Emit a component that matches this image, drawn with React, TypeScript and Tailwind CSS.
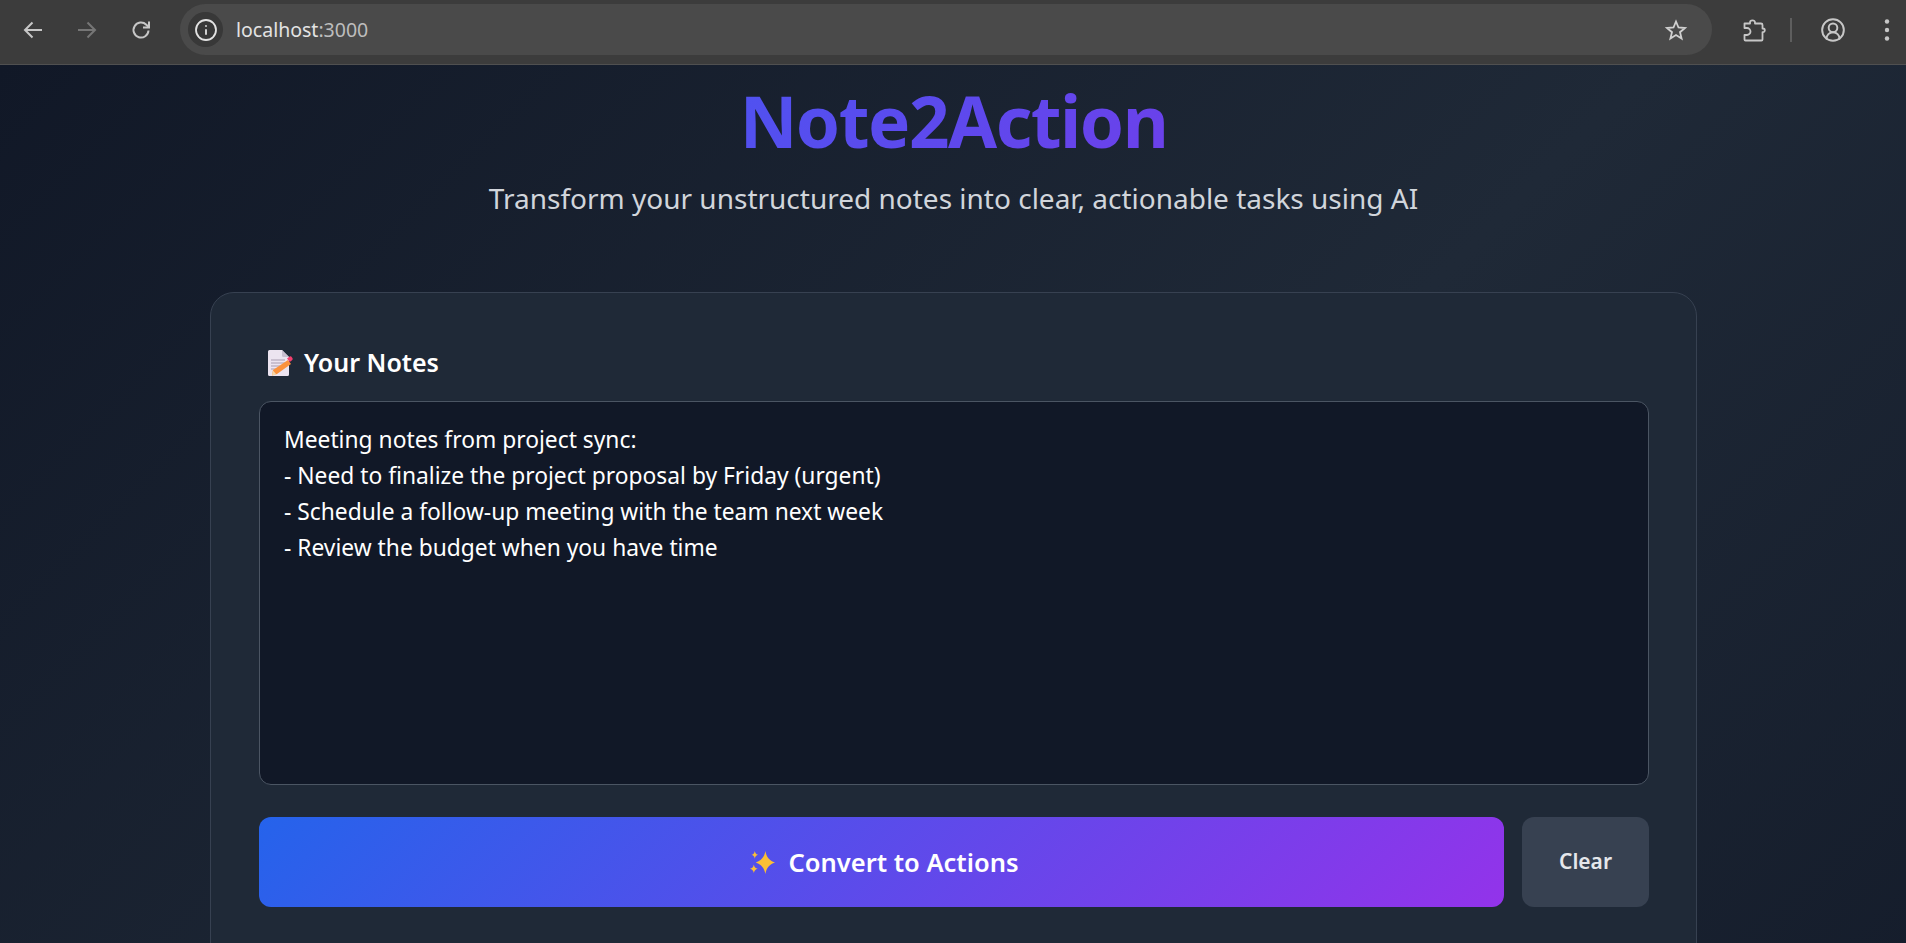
import { Info, CircleUserRound } from "lucide-react";

const MemoIcon = () => (
  <svg viewBox="0 0 26 28" className="w-[26px] h-[28px]">
    <path d="M1 2.5A1.5 1.5 0 0 1 2.5 1H15l7 7v17.5a1.5 1.5 0 0 1-1.5 1.5h-18A1.5 1.5 0 0 1 1 25.500Z" fill="#ece4f0" />
    <path d="M15 1l7 7h-5.500A1.500 1.500 0 0 1 15 6.500Z" fill="#c9bfd0" />
    <path d="M4 11h14M4 14h14M4 17h9M4 20h6" stroke="#a79bb0" strokeWidth="1.200" />
    <path d="M6 21l15-10 3 4-14 10-5 1.500Z" fill="#fb923c" />
    <path d="M5 26.500l1-5 3.500 4Z" fill="#f7d7a8" />
    <path d="M20 9.500l2-1.500a2 2 0 0 1 3 .500 2 2 0 0 1-.300 3L22.800 13Z" fill="#f43f6e" />
  </svg>
);

const SparklesIcon = () => (
  <svg viewBox="0 0 28 26" className="w-[27px] h-[25px]" fill="#fbbf36">
    <path d="M17 1c1 6 4 10 10 12-6 2-9 6-10 12-1-6-4-10-10-12 6-2 9-6 10-12Z" />
    <path d="M6 1c.4 2.400 1.600 3.600 3.500 4C7.600 5.400 6.400 6.600 6 9c-.4-2.400-1.600-3.600-3.500-4C4.400 4.600 5.600 3.400 6 1Z" />
    <path d="M5 15c.4 2.600 1.800 4 4 4.500-2.200.500-3.600 1.900-4 4.500-.4-2.600-1.800-4-4-4.500 2.200-.500 3.600-1.900 4-4.500Z" />
  </svg>
);

const ChromeIcon = ({ children, className = "" }: { children: React.ReactNode; className?: string }) => (
  <svg
    viewBox="0 0 24 24"
    fill="none"
    stroke="currentColor"
    strokeWidth="2"
    className={`w-[24px] h-[24px] shrink-0 ${className}`}
  >
    {children}
  </svg>
);

const BrowserBar = () => (
  <div className="h-[65px] shrink-0 flex items-center pb-[4px] bg-[#3c3c3c] border-b border-[#505050] text-[#c7c7c7]">
    <div className="flex items-center gap-[30px] pl-[21px] pr-[27px]">
      <ChromeIcon>
        <path d="M21 12H4M11.500 4.500 4 12l7.500 7.500" />
      </ChromeIcon>
      <ChromeIcon className="text-[#767676]">
        <path d="M3 12h17M12.500 4.500 20 12l-7.500 7.500" />
      </ChromeIcon>
      <ChromeIcon>
        <path d="M19.500 12.500a7.500 7.500 0 1 1-2.200-5.800L20 9.300" />
        <path d="M20 3.500v6h-6" />
      </ChromeIcon>
    </div>
    <div className="flex-1 h-[51px] -mt-[1px] flex items-center rounded-full bg-[#4a4a4a] pl-[8px] pr-[24px]">
      <div className="w-[35px] h-[35px] rounded-full bg-[#383838] flex items-center justify-center">
        <Info className="w-[24px] h-[24px] text-[#e3e3e3]" strokeWidth={1.800} />
      </div>
      <span className="ml-[13px] text-[19.500px] text-[#e3e3e3]">
        localhost<span className="text-[#bdbdbd]">:3000</span>
      </span>
      <ChromeIcon className="ml-auto text-[#d0d0d0]">
        <path strokeLinejoin="miter" strokeWidth="1.800" d="M12 3.500l2.500 6 6.500.5-5 4.200 1.600 6.300L12 17.100l-5.600 3.400L8 14.200 3 10l6.500-.5Z" />
      </ChromeIcon>
    </div>
    <div className="flex items-center pl-[30px] pr-[7px]">
      <ChromeIcon>
        <path
          strokeWidth="1.800"
          strokeLinejoin="round"
          d="M2.500 5.500H8V4.500a2.500 2.200 0 0 1 5 0v1h6a1.500 1.500 0 0 1 1.500 1.500v3.500h.500a1.800 1.800 0 0 1 0 3.600h-.500v7.400a1 1 0 0 1-1 1H3.500a1 1 0 0 1-1-1V17H5a3.500 3.500 0 0 0 0-7H2.500Z"
        />
      </ChromeIcon>
      <div className="ml-[24px] w-[2px] h-[24px] bg-[#5e5e5e]" />
      <CircleUserRound className="ml-[28px] w-[26px] h-[26px]" strokeWidth={1.800} />
      <svg viewBox="0 0 24 24" className="ml-[29px] w-[24px] h-[24px]" fill="currentColor">
        <circle cx="12" cy="3.500" r="2.200" />
        <circle cx="12" cy="12" r="2.200" />
        <circle cx="12" cy="20.500" r="2.200" />
      </svg>
    </div>
  </div>
);

export default function App() {
  const notes = `Meeting notes from project sync:
- Need to finalize the project proposal by Friday (urgent)
- Schedule a follow-up meeting with the team next week
- Review the budget when you have time`;

  return (
    <div className="h-[943px] overflow-hidden flex flex-col font-['Noto_Sans',sans-serif]">
      <BrowserBar />
      <main className="flex-1 overflow-hidden bg-[linear-gradient(135deg,#111827,#1f2937,#111827)] bg-[length:100%_1400px] bg-no-repeat pl-[210px] pr-[209px]">
        <header className="text-center pt-[16px]">
          <h1 className="inline-block text-[71px] leading-[80px] font-bold tracking-[-1.500px] bg-[linear-gradient(135deg,#4f52f0,#6c40ea)] bg-clip-text text-transparent">
            Note2Action
          </h1>
          <p className="mt-[18px] text-[28px] leading-[38px] text-[#d1d5db]">
            Transform your unstructured notes into clear, actionable tasks using AI
          </p>
        </header>
        <section className="mt-[75px] h-[700px] rounded-[24px] border border-[#374151] bg-[#1f2937] pt-[54px] pl-[48px] pr-[47px]">
          <div className="flex items-center gap-[11px] pl-[8px] h-[32px]">
            <MemoIcon />
            <span className="text-[25px] font-semibold text-white">Your Notes</span>
          </div>
          <textarea
            readOnly
            value={notes}
            className="mt-[22px] block w-full h-[384px] resize-none rounded-[12px] border border-[#4b5563] bg-[#111827] px-[24px] py-[20px] text-[22.800px] leading-[36px] text-white outline-none"
          />
          <div className="mt-[32px] flex gap-[18px] h-[90px]">
            <button className="flex-1 flex items-center justify-center gap-[13px] pl-[4px] rounded-[12px] bg-[linear-gradient(135deg,#2563eb,#9333ea)] text-[25.500px] font-semibold text-white">
              <SparklesIcon />
              Convert to Actions
            </button>
            <button className="w-[127px] rounded-[12px] bg-[#374151] text-[21px] font-semibold text-[#e5e7eb]">
              Clear
            </button>
          </div>
        </section>
      </main>
    </div>
  );
}
